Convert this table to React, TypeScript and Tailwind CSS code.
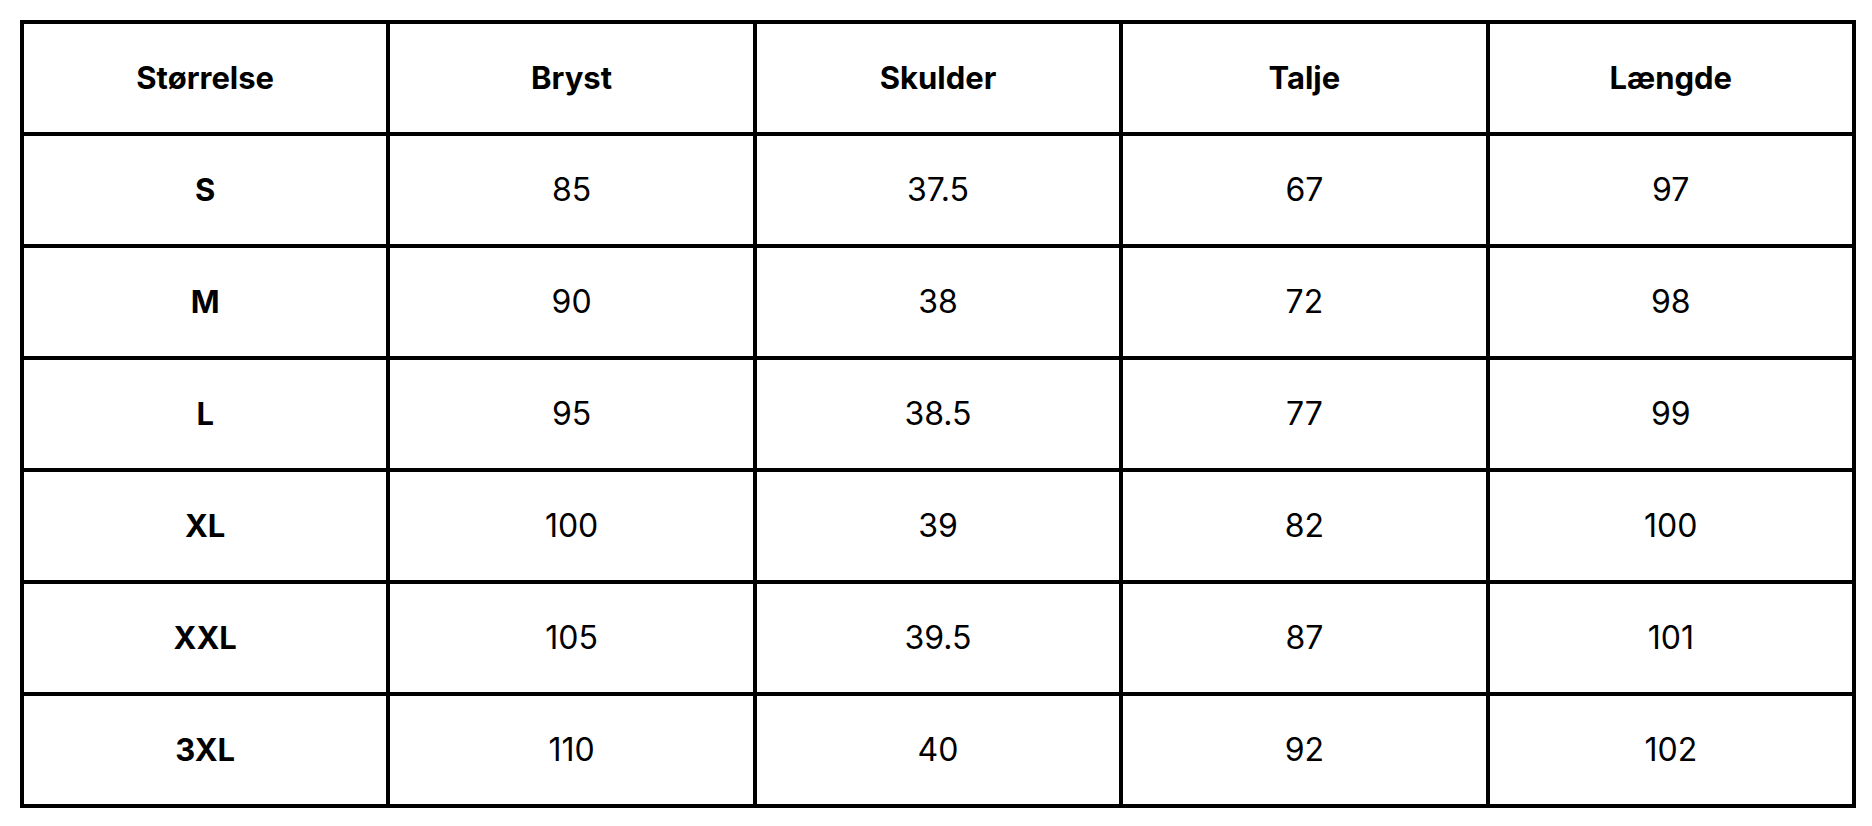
const headers = ["Størrelse", "Bryst", "Skulder", "Talje", "Længde"];

const rows = [
  ["S", "85", "37.5", "67", "97"],
  ["M", "90", "38", "72", "98"],
  ["L", "95", "38.5", "77", "99"],
  ["XL", "100", "39", "82", "100"],
  ["XXL", "105", "39.5", "87", "101"],
  ["3XL", "110", "40", "92", "102"],
];

const App = () => {
  return (
    <div className="w-[1872px] h-[826px] bg-white pt-[20px] pl-[20px] font-['Inter',_'Noto_Sans',sans-serif] text-black">
      <table className="w-[1836px] table-fixed border-collapse border-[4px] border-black">
        <thead>
          <tr>
            {headers.map((h) => (
              <th
                key={h}
                className="h-[112px] p-0 border-[4px] border-black text-center align-middle text-[31px] font-bold"
              >
                {h}
              </th>
            ))}
          </tr>
        </thead>
        <tbody>
          {rows.map((row) => (
            <tr key={row[0]}>
              {row.map((cell, i) => (
                <td
                  key={i}
                  className={
                    i === 0
                      ? "h-[112px] p-0 border-[4px] border-black text-center align-middle text-[31px] font-bold"
                      : "h-[112px] p-0 border-[4px] border-black text-center align-middle text-[32px] font-normal"
                  }
                >
                  {cell}
                </td>
              ))}
            </tr>
          ))}
        </tbody>
      </table>
    </div>
  );
};

export default App;
